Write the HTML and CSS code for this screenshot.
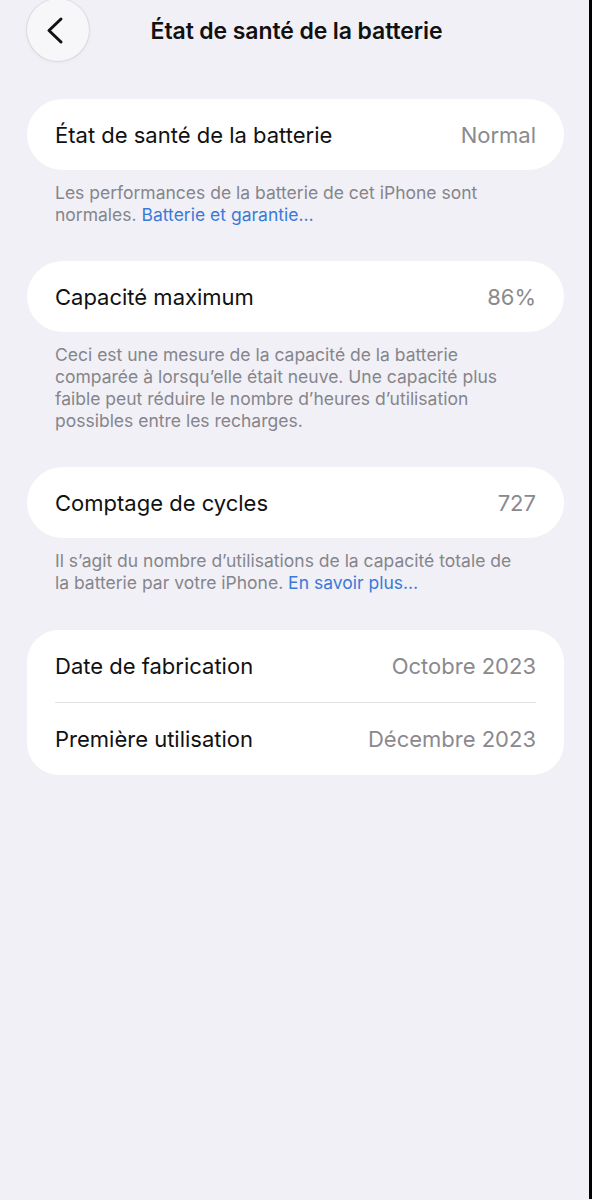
FILE: index.html
```html
<!DOCTYPE html>
<html lang="fr">
<head>
  <meta charset="UTF-8">
  <title>État de santé de la batterie</title>
  <link rel="stylesheet" href="styles.css">
</head>
<body>
  <div class="screen">

    <div class="nav-bar">
      <button class="back-button" aria-label="Retour">
        <svg width="30" height="30" viewBox="0 0 30 30">
          <path d="M19 4 L7 15.5 L19 27" fill="none" stroke="#111" stroke-width="3" stroke-linecap="round" stroke-linejoin="round"/>
        </svg>
      </button>
      <h1 class="nav-title">État de santé de la batterie</h1>
    </div>

    <div class="group group-first">
      <div class="row">
        <span class="row-label">État de santé de la batterie</span>
        <span class="row-value">Normal</span>
      </div>
    </div>
    <p class="footnote">Les performances de la batterie de cet iPhone sont normales. <a href="#">Batterie et garantie…</a></p>

    <div class="group">
      <div class="row">
        <span class="row-label">Capacité maximum</span>
        <span class="row-value">86%</span>
      </div>
    </div>
    <p class="footnote">Ceci est une mesure de la capacité de la batterie comparée à lorsqu’elle était neuve. Une capacité plus faible peut réduire le nombre d’heures d’utilisation possibles entre les recharges.</p>

    <div class="group">
      <div class="row">
        <span class="row-label">Comptage de cycles</span>
        <span class="row-value">727</span>
      </div>
    </div>
    <p class="footnote">Il s’agit du nombre d’utilisations de la capacité totale de la batterie par votre iPhone. <a href="#">En savoir plus…</a></p>

    <div class="group group-list">
      <div class="row">
        <span class="row-label">Date de fabrication</span>
        <span class="row-value">Octobre 2023</span>
      </div>
      <div class="row">
        <span class="row-label">Première utilisation</span>
        <span class="row-value">Décembre 2023</span>
      </div>
    </div>

  </div>
</body>
</html>
```

FILE: styles.css
```css
html, body {
  margin: 0;
  padding: 0;
  background-color: #f1f0f6;
}
body {
  font-family: Inter, "Liberation Sans", sans-serif;
  color: #111;
}
.screen {
  min-height: 1200px;
  box-sizing: border-box;
  border-right: 3px solid #000;
  padding: 0 25px 0 27px;
}
.nav-bar {
  display: flex;
  align-items: center;
  height: 62px;
  margin-top: -1px;
}
.back-button {
  width: 62px;
  height: 62px;
  border-radius: 50%;
  border: none;
  padding: 0 2px 0 0;
  background-color: #f7f7f9;
  box-shadow: 0 0 0 1px rgba(0, 0, 0, 0.07), 0 1px 4px rgba(0, 0, 0, 0.06);
  display: flex;
  align-items: center;
  justify-content: center;
}
.nav-title {
  flex: 1;
  margin: 2px 0 0 -62px;
  text-align: center;
  font-size: 23px;
  font-weight: 600;
  letter-spacing: -0.1px;
  padding-left: 2px;
}
.group {
  background-color: #fff;
  border-radius: 36px;
  margin-top: 35px;
  padding: 0 28px;
}
.group-first {
  margin-top: 38px;
}
.group-list {
  border-radius: 32px;
  margin-top: 36px;
}
.row {
  display: flex;
  justify-content: space-between;
  align-items: center;
  height: 71px;
  font-size: 22px;
}
.group-list .row {
  height: 72px;
}
.group-list .row + .row {
  border-top: 1px solid #e3e3e6;
}
.row-value {
  color: #8a8a8e;
}
.footnote {
  margin: 12px 40px 0 28px;
  font-size: 17.5px;
  line-height: 22px;
  color: #85858b;
}
.footnote a {
  color: #3a7ad9;
  text-decoration: none;
}
```
